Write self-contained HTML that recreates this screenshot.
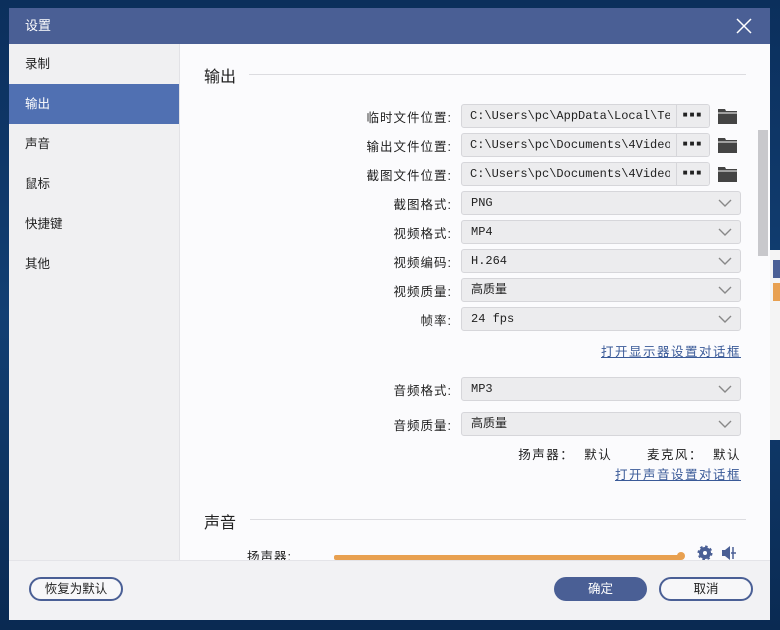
<!DOCTYPE html>
<html><head><meta charset="utf-8"><style>
*{margin:0;padding:0;box-sizing:border-box}
body{width:780px;height:630px;overflow:hidden;background:linear-gradient(180deg,#0b2f5c,#123f73 50%,#0a2a52);font-family:"Liberation Sans","Noto Sans CJK SC",sans-serif;font-size:12px;color:#222;position:relative}
.dlg{position:absolute;left:9px;top:8px;width:761px;height:612px;background:#fbfbfd}
.title{position:absolute;left:0;top:0;width:761px;height:36px;background:#4a5f95;color:#fff;font-size:13px;line-height:36px;padding-left:16px}
.x{position:absolute;right:18px;top:10px;width:16px;height:16px}
.side{position:absolute;left:0;top:36px;width:171px;height:516px;background:#f0f0f2;border-right:1px solid #e2e2e6}
.side div{height:40px;line-height:40px;padding-left:16px;font-size:12.5px;color:#222}
.side .on{background:#5070b2;color:#fff}
.foot{position:absolute;left:0;top:552px;width:761px;height:60px;background:#f2f2f4;border-top:1px solid #e4e4e8}
.btn{position:absolute;height:24px;border-radius:12px;font-size:12.5px;text-align:center;line-height:21px}
.h{position:absolute;font-size:16px;color:#222}
.hl{position:absolute;height:1px;background:#dcdce0}
.lbl{position:absolute;right:318px;font-size:12.5px;letter-spacing:1px;text-align:right;white-space:nowrap}
.inp{position:absolute;left:452px;width:249px;height:24px;background:#ececee;border:1px solid #d6d6da;border-radius:3px;font-family:"Liberation Mono","Noto Sans CJK SC",monospace;font-size:12px;line-height:22px;padding-left:8px;overflow:hidden;white-space:nowrap}
.inp .dots{position:absolute;right:0;top:0;width:33px;height:22px;border-left:1px solid #d6d6da;background:#ececee;text-align:center;font-weight:bold;letter-spacing:2px;font-size:8px}
.inp .t{display:block;width:200px;overflow:hidden}
.fold{position:absolute;left:709px;width:19px;height:15px}
.sel{position:absolute;left:452px;width:280px;height:24px;background:#ececee;border:1px solid #d6d6da;border-radius:3px;font-family:"Liberation Mono","Noto Sans CJK SC",monospace;font-size:12px;line-height:22px;padding-left:9px}
.sel svg{position:absolute;right:8px;top:7px}
.link{position:absolute;right:29px;color:#3a5a98;text-decoration:underline;font-size:12.5px;letter-spacing:1.5px;white-space:nowrap}
</style></head><body>
<div style="position:absolute;left:770px;top:250px;width:10px;height:190px;background:#f4f4f4"></div>
<div style="position:absolute;left:773px;top:260px;width:7px;height:18px;background:#4a5f95"></div>
<div style="position:absolute;left:773px;top:283px;width:7px;height:18px;background:#e8a050"></div>
<div class="dlg">
<div class="title">设置<svg class="x" viewBox="0 0 16 16"><path d="M1 1L15 15M15 1L1 15" stroke="#fff" stroke-width="1.5"/></svg></div>
<div class="side"><div>录制</div><div class="on">输出</div><div>声音</div><div>鼠标</div><div>快捷键</div><div>其他</div></div>
<div style="position:absolute;left:749px;top:122px;width:10px;height:126px;background:#c8c8cc"></div>
<div class="h" style="left:195px;top:55px">输出</div><div class="hl" style="left:240px;top:66px;width:497px"></div>
<div class="lbl" style="top:99px">临时文件位置:</div>
<div class="lbl" style="top:128px">输出文件位置:</div>
<div class="lbl" style="top:157px">截图文件位置:</div>
<div class="lbl" style="top:186px">截图格式:</div>
<div class="lbl" style="top:215px">视频格式:</div>
<div class="lbl" style="top:244px">视频编码:</div>
<div class="lbl" style="top:273px">视频质量:</div>
<div class="lbl" style="top:302px">帧率:</div>
<div class="lbl" style="top:372px">音频格式:</div>
<div class="lbl" style="top:407px">音频质量:</div>
<div class="inp" style="top:96px"><span class="t">C:\Users\pc\AppData\Local\Temp</span><span class="dots">■■■</span></div>
<div class="inp" style="top:125px"><span class="t">C:\Users\pc\Documents\4Videos</span><span class="dots">■■■</span></div>
<div class="inp" style="top:154px"><span class="t">C:\Users\pc\Documents\4Videos</span><span class="dots">■■■</span></div>
<svg class="fold" style="top:101px" viewBox="0 0 19 15"><path d="M0 0h7l1 2h11v13H0z" fill="#444"/><path d="M0 4h19" stroke="#fbfbfd"/></svg>
<svg class="fold" style="top:130px" viewBox="0 0 19 15"><path d="M0 0h7l1 2h11v13H0z" fill="#444"/><path d="M0 4h19" stroke="#fbfbfd"/></svg>
<svg class="fold" style="top:159px" viewBox="0 0 19 15"><path d="M0 0h7l1 2h11v13H0z" fill="#444"/><path d="M0 4h19" stroke="#fbfbfd"/></svg>
<div class="sel" style="top:183px">PNG<svg width="14" height="8"><path d="M1 1l6 6 6-6" stroke="#888" fill="none" stroke-width="1.4"/></svg></div>
<div class="sel" style="top:212px">MP4<svg width="14" height="8"><path d="M1 1l6 6 6-6" stroke="#888" fill="none" stroke-width="1.4"/></svg></div>
<div class="sel" style="top:241px">H.264<svg width="14" height="8"><path d="M1 1l6 6 6-6" stroke="#888" fill="none" stroke-width="1.4"/></svg></div>
<div class="sel" style="top:270px">高质量<svg width="14" height="8"><path d="M1 1l6 6 6-6" stroke="#888" fill="none" stroke-width="1.4"/></svg></div>
<div class="sel" style="top:299px">24 fps<svg width="14" height="8"><path d="M1 1l6 6 6-6" stroke="#888" fill="none" stroke-width="1.4"/></svg></div>
<div class="link" style="top:333px">打开显示器设置对话框</div>
<div class="sel" style="top:369px">MP3<svg width="14" height="8"><path d="M1 1l6 6 6-6" stroke="#888" fill="none" stroke-width="1.4"/></svg></div>
<div class="sel" style="top:404px">高质量<svg width="14" height="8"><path d="M1 1l6 6 6-6" stroke="#888" fill="none" stroke-width="1.4"/></svg></div>
<div style="position:absolute;right:29px;top:436px;font-size:12.5px;letter-spacing:1.5px;white-space:nowrap">扬声器：&nbsp;&nbsp;默认&nbsp;&nbsp;&nbsp;&nbsp;&nbsp;&nbsp;&nbsp;麦克风：&nbsp;&nbsp;默认</div>
<div class="link" style="top:456px">打开声音设置对话框</div>
<div class="h" style="left:195px;top:501px">声音</div><div class="hl" style="left:241px;top:511px;width:496px"></div>
<div style="position:absolute;left:238px;top:538px;font-size:12.5px;letter-spacing:1px">扬声器:</div>
<div style="position:absolute;left:325px;top:547px;width:348px;height:5px;background:#e8a050;border-radius:2px"></div>
<div style="position:absolute;left:668px;top:544px;width:8px;height:8px;background:#e8a050;border-radius:4px"></div>
<svg style="position:absolute;left:688px;top:537px" width="16" height="16" viewBox="0 0 16 16"><circle cx="8" cy="8" r="6" fill="#4a5f95" stroke="#4a5f95" stroke-width="3" stroke-dasharray="2.3 2.4"/><circle cx="8" cy="8" r="2" fill="#fff"/></svg>
<svg style="position:absolute;left:712px;top:537px" width="16" height="16" viewBox="0 0 16 16"><path d="M1 5h3l5-4v14l-5-4H1z" fill="#4a5f95"/><path d="M12 2v12M10 8h5" stroke="#4a5f95" stroke-width="1.5"/></svg>
<div class="foot">
<div class="btn" style="left:20px;top:16px;width:94px;border:2px solid #4a5f95;background:#f7f7f9">恢复为默认</div>
<div class="btn" style="left:545px;top:16px;width:93px;background:#4a5f95;color:#fff;line-height:24px">确定</div>
<div class="btn" style="left:650px;top:16px;width:94px;border:2px solid #4a5f95;background:#f7f7f9">取消</div>
</div>
</div>
</body></html>
